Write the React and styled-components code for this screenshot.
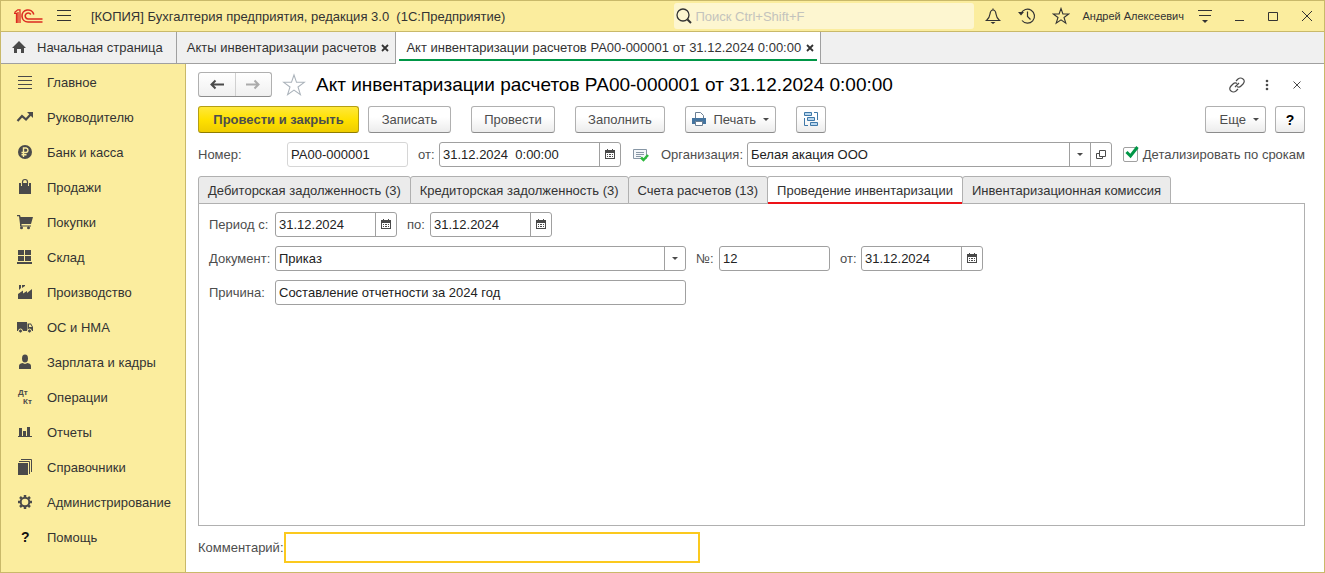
import React from "react";
import styled, { createGlobalStyle, css } from "styled-components";

const c = {
  yellow: "#fbed9e",
  gold: "#c9b96a",
  grey: "#a0a0a0",
  text: "#333333",
  label: "#4d4d4d",
  icon: "#4a4a4a",
};

const Global = createGlobalStyle`
  *, *::before, *::after { box-sizing: border-box; }
  body { margin: 0; background: #fff; }
  body, button, input, select {
    font-family: "Liberation Sans", Arial, sans-serif;
    font-size: 13px;
    color: ${c.text};
  }
  button { cursor: pointer; }
  svg { display: block; flex: none; }
`;

const Window = styled.div`
  display: flex;
  flex-direction: column;
  min-height: 100vh;
  border: 1px solid ${c.gold};
  white-space: nowrap;
`;

const TitleBar = styled.header`
  display: flex;
  align-items: center;
  height: 31px;
  padding-left: 12px;
  background: ${c.yellow};
  border-bottom: 1px solid ${c.gold};
`;

const Plain = styled.button`
  display: flex;
  align-items: center;
  justify-content: center;
  flex: none;
  width: ${(p) => p.$w || 34}px;
  height: 24px;
  padding: 0;
  border: 0;
  background: none;
  color: ${c.text};
`;

const AppName = styled.div`
  flex: 1;
  min-width: 0;
  overflow: hidden;
  padding-left: 6px;
`;

const Search = styled.label`
  display: flex;
  align-items: center;
  gap: 3px;
  flex: 0 1 300px;
  height: 26px;
  padding-left: 2px;
  margin-right: 2px;
  border-radius: 3px;
  background: #fdf6d0;
`;

const SearchInput = styled.input`
  flex: 1;
  min-width: 0;
  padding: 0;
  border: 0;
  outline: 0;
  background: none;
  &::placeholder { color: #c3c3bd; opacity: 1; }
`;

const User = styled.button`
  flex: none;
  padding: 0 4px;
  border: 0;
  background: none;
  font-size: 11px;
`;

const WindowTabs = styled.nav`
  display: flex;
  height: 32px;
  background: #f0f0f0;
  border-bottom: 1px solid ${c.grey};
`;

const WindowTab = styled.div`
  display: flex;
  align-items: center;
  gap: 2px;
  padding: 0 3px 0 10px;
  border-right: 1px solid ${c.grey};
  ${(p) =>
    p.$active &&
    css`
      margin-bottom: -1px;
      padding-bottom: 1px;
      background: linear-gradient(#009646, #009646) 3px 27px / calc(100% - 6px) 2px no-repeat #fff;
    `}
`;

const TabLink = styled.a`
  display: flex;
  align-items: center;
  gap: 10px;
  padding-right: ${(p) => p.$end || 0}px;
  color: ${c.text};
  text-decoration: none;
`;

const Body = styled.div`
  display: flex;
  flex: 1;
`;

const Sidebar = styled.nav`
  flex: none;
  width: 185px;
  padding-top: 1px;
  background: ${c.yellow};
  border-right: 1px solid ${c.gold};
`;

const SideLink = styled.a`
  display: flex;
  align-items: center;
  gap: 13px;
  height: 35px;
  padding-left: 15px;
  color: ${c.text};
  text-decoration: none;
`;

const Content = styled.main`
  display: flex;
  flex-direction: column;
  flex: 1;
  min-width: 0;
  padding: 8px 19px 9px 12px;
`;

const Heading = styled.div`
  display: flex;
  align-items: center;
  height: 25px;
  margin-bottom: 9px;
`;

const Title = styled.h1`
  flex: 1;
  min-width: 0;
  margin: 0;
  padding-left: 10px;
  font-size: 19px;
  font-weight: 400;
  color: #000;
`;

const NavPair = styled.div`
  display: flex;
  width: 74px;
  height: 25px;
  margin-right: 10px;
  border: 1px solid #b0b0b0;
  border-bottom-color: #8c8c8c;
  border-radius: 3px;
  background: linear-gradient(#fff, #f0f0f0);
`;

const NavButton = styled.button`
  display: flex;
  flex: 1;
  align-items: center;
  justify-content: center;
  padding: 0;
  border: 0;
  background: none;
  color: ${(p) => (p.disabled ? "#ababab" : c.icon)};
  & + & { border-left: 1px solid #d0d0d0; }
`;

const Toolbar = styled.div`
  display: flex;
  gap: 20px;
  margin-bottom: 9px;
`;

const Group = styled.div`
  display: flex;
  align-items: center;
  gap: 9px;
  flex: ${(p) => (p.$grow ? 1 : "none")};
  min-width: 0;
`;

const Button = styled.button`
  display: flex;
  align-items: center;
  justify-content: center;
  gap: 7px;
  min-width: ${(p) => p.$w}px;
  height: 27px;
  padding: 0 5px;
  border: 1px solid #b0b0b0;
  border-bottom-color: #8c8c8c;
  border-radius: 3px;
  background: linear-gradient(#fff 40%, #ececec);
  color: ${c.label};
  ${(p) =>
    p.$menu &&
    css`
      justify-content: flex-end;
      padding-right: 6px;
    `}
  ${(p) =>
    p.$primary &&
    css`
      border-color: #b59f12;
      border-bottom-color: #8f7c00;
      background: linear-gradient(#ffe83a, #ffe100 50%, #efcd00);
      font-weight: 700;
    `}
`;

const HelpMark = styled.b`
  font-size: 14px;
  color: #000;
`;

const FieldRow = styled.div`
  display: flex;
  align-items: center;
  margin-bottom: 9px;
`;

const Label = styled.label`
  flex: none;
  width: ${(p) => (p.$w ? `${p.$w}px` : "auto")};
  padding-left: ${(p) => p.$before || 0}px;
  color: ${c.label};
`;

const Box = styled.div`
  display: flex;
  flex: ${(p) => (p.$w ? "none" : 1)};
  width: ${(p) => (p.$w ? `${p.$w}px` : "auto")};
  min-width: 0;
  height: 25px;
  border: 1px solid ${(p) => (p.$soft ? "#d6d6d6" : c.grey)};
  border-radius: 3px;
  background: #fff;
`;

const control = css`
  flex: 1;
  min-width: 0;
  width: 100%;
  padding: 0 3px;
  border: 0;
  outline: 0;
  background: none;
  color: #222;
`;

const Input = styled.input`
  ${control}
`;

const Select = styled.select`
  ${control}
  appearance: none;
`;

const Addon = styled.button`
  display: flex;
  align-items: center;
  justify-content: center;
  flex: none;
  width: 21px;
  padding: 0;
  border: 0;
  border-left: 1px solid ${c.grey};
  background: none;
  color: ${c.icon};
`;

const CheckLabel = styled.label`
  display: flex;
  align-items: center;
  gap: 5px;
  flex: none;
  padding-left: 11px;
  color: ${c.label};
`;

const CheckBox = styled.span`
  position: relative;
  width: 15px;
  height: 15px;
  svg { position: absolute; left: 2px; bottom: 3px; pointer-events: none; }
  input:not(:checked) + svg { display: none; }
`;

const CheckInput = styled.input`
  display: block;
  appearance: none;
  width: 15px;
  height: 15px;
  margin: 0;
  border: 1px solid ${c.grey};
  border-radius: 2px;
  background: #fff;
`;

const Tabs = styled.div`
  display: flex;
  position: relative;
  margin-bottom: -1px;
`;

const Tab = styled.button`
  height: 28px;
  padding: 0 9px;
  border: 1px solid #b0b0b0;
  border-radius: 3px 3px 0 0;
  background: #ebebeb;
  & + & { margin-left: -1px; }
  &[aria-selected="true"] {
    border-bottom: 0;
    background: #fff;
    box-shadow: inset 0 -2px #ed1218;
  }
`;

const Panel = styled.section`
  flex: 1;
  padding: 8px 10px;
  border: 1px solid #b0b0b0;
`;

const Footer = styled.div`
  display: flex;
  align-items: center;
  padding-top: 6px;
`;

const Comment = styled.input`
  width: 416px;
  height: 31px;
  padding: 0 4px;
  border: 2px solid #fbc91e;
  outline: 0;
  background: #fff;
`;

const Svg = ({ w = 18, h = 18, children, ...rest }) => (
  <svg width={w} height={h} viewBox={`0 0 ${w} ${h}`} fill="none" stroke="currentColor" aria-hidden="true" {...rest}>
    {children}
  </svg>
);

const Logo = () => (
  <Svg w={30} h={16} stroke="#dc2a20" strokeWidth="1.6">
    <path d="M1 5.300H3.500V15M1.500 4.500 4.800 1.800H7V15M5 4V15" strokeWidth="1.300" />
    <path d="M20.800 6.500A6 6 0 1 0 15 14H29.500" />
    <path d="M17.800 6.500A3 3 0 1 0 15 11H29.500" />
  </Svg>
);

const Caret = () => (
  <Svg w={6} h={3} stroke="none" fill={c.icon}>
    <path d="M0 0H6L3 3Z" />
  </Svg>
);

const Calendar = () => (
  <Svg w={10} h={11} stroke="none" fill={c.icon}>
    <path fillRule="evenodd" d="M0 1H2V0H3V1H7V0H8V1H10V10H0ZM1 4V9H9V4Z" />
    <path d="M2 5H3V6H2ZM4 5H6V6H4ZM7 5H8V6H7ZM2 7H3V8H2ZM4 7H6V8H4ZM7 7H8V8H7Z" />
  </Svg>
);

const Cross = () => (
  <Svg w={8} h={8} strokeWidth="1.800">
    <path d="M1 1 7 7M7 1 1 7" />
  </Svg>
);

const Arrow = ({ flip }) => (
  <Svg w={14} h={11} strokeWidth="2">
    {flip ? <path d="M0 5.500H12M8.500 1.500 12.500 5.500 8.500 9.500" /> : <path d="M14 5.500H2M5.500 1.500 1.500 5.500 5.500 9.500" />}
  </Svg>
);

const STAR = "M9 1.500 10.900 7H16.700L12 10.500 13.800 16.200 9 12.800 4.200 16.200 6 10.500 1.300 7H7.100Z";

const solid = { stroke: "none", fill: c.icon };

const SideIcon = (props) => <Svg w={18} h={19} {...props} />;

const sideItems = [
  ["Главное", <SideIcon key="i" stroke={c.icon}><path d="M2 3.500H16M2 7.500H16M2 11.500H16M2 15.500H16" /></SideIcon>],
  ["Руководителю", <SideIcon key="i" stroke={c.icon} strokeWidth="2.200"><path d="M1.500 13 6 8 10 11.500 15 6" /><path d="M11 4H17V10Z" stroke="none" fill={c.icon} /></SideIcon>],
  ["Банк и касса", <SideIcon key="i" stroke={c.yellow} strokeWidth="1.400"><circle cx="9" cy="9" r="7" fill={c.icon} stroke="none" /><path d="M7.500 14V5H10.200A2.300 2.300 0 0 1 10.200 9.500H5.500M5.500 11.700H10.500" /></SideIcon>],
  ["Продажи", <SideIcon key="i" {...solid}><path d="M3 5H5V8H6V5H12V8H13V5H15V16H3Z" /><path d="M6.500 7V4Q6.500 1.500 9 1.500T11.500 4V7" fill="none" stroke={c.icon} strokeWidth="1.200" /></SideIcon>],
  ["Покупки", <SideIcon key="i" {...solid}><path d="M1 2H4L4.600 4H17L15 11H5.500V12.500H15V13.500H4V11L3 3.200H1Z" /><circle cx="5.500" cy="14.800" r="1.500" /><circle cx="12.500" cy="14.800" r="1.500" /></SideIcon>],
  ["Склад", <SideIcon key="i" {...solid}><path d="M2 2H8V7H2ZM9 2H15V7H9ZM2 8H8V13H2ZM9 8H15V13H9ZM1 14H16V16H1Z" /></SideIcon>],
  ["Производство", <SideIcon key="i" {...solid}><path d="M2 16V11L7 7.500V10.500L11 8V10L16 6V16ZM3 2H5V5L3 7ZM6 2H9V3L6 5Z" /></SideIcon>],
  ["ОС и НМА", <SideIcon key="i" {...solid}><path fillRule="evenodd" d="M1 4H11V13H1ZM11.500 5.500H15L17 9V13H11.500ZM13 6.500V9H16L14.500 6.500Z" /><g stroke={c.yellow}><circle cx="4.500" cy="13" r="2" /><circle cx="13.500" cy="13" r="2" /></g></SideIcon>],
  ["Зарплата и кадры", <SideIcon key="i" {...solid}><ellipse cx="9" cy="5.500" rx="3" ry="4" /><path d="M3 16V13Q3 10.500 6.500 10L9 11 11.500 10Q15 10.500 15 13V16Z" /></SideIcon>],
  ["Операции", <SideIcon key="i" {...solid}><text x="2" y="7" fontSize="8" fontWeight="700">Дт</text><text x="7" y="16" fontSize="8" fontWeight="700">Кт</text></SideIcon>],
  ["Отчеты", <SideIcon key="i" {...solid}><path d="M3 5H6V13H3ZM7 8H10V13H7ZM11 4H14V13H11ZM2 13H16V14H2Z" /></SideIcon>],
  ["Справочники", <SideIcon key="i" {...solid}><path d="M2 5H12V17H2Z" /><path d="M3 3.500H13.500V16M5 1.500H15.500V14" fill="none" stroke={c.icon} /></SideIcon>],
  ["Администрирование", <SideIcon key="i" stroke={c.icon} strokeWidth="2"><circle cx="9" cy="9" r="4.300" /><path strokeWidth="2.500" d="M9 2V4.500M9 13.500V16M2 9H4.500M13.500 9H16M4 4 5.700 5.700M12.300 12.300 14 14M4 14 5.700 12.300M12.300 5.700 14 4" /></SideIcon>],
  ["Помощь", <SideIcon key="i" stroke="none" fill="#111"><text x="5" y="14" fontSize="14" fontWeight="700">?</text></SideIcon>],
];

const formTabs = [
  "Дебиторская задолженность (3)",
  "Кредиторская задолженность (3)",
  "Счета расчетов (13)",
  "Проведение инвентаризации",
  "Инвентаризационная комиссия",
];

const DateField = ({ id, w = 122, value }) => (
  <Box $w={w}>
    <Input id={id} defaultValue={value} />
    <Addon aria-label="Выбрать дату"><Calendar /></Addon>
  </Box>
);

export default function App() {
  return (
    <>
      <Global />
      <Window>
        <TitleBar>
          <Logo />
          <Plain $w={42} aria-label="Меню">
            <Svg w={16} h={12}><path d="M1 .5H15M1 5.500H15M1 10.500H15" /></Svg>
          </Plain>
          <AppName>[КОПИЯ] Бухгалтерия предприятия, редакция 3.0&nbsp; (1С:Предприятие)</AppName>
          <Search>
            <Svg w={16} h={16} strokeWidth="1.300"><circle cx="7" cy="7" r="6" /><path d="M11.500 11.500 15 15" strokeWidth="2" /></Svg>
            <SearchInput placeholder="Поиск Ctrl+Shift+F" aria-label="Поиск" />
          </Search>
          <Plain aria-label="Уведомления">
            <Svg strokeWidth="1.200"><path d="M9 1.500V3M2.500 13.500H15.500Q12.500 11 12 7 11.500 3 9 3T6 7Q5.500 11 2.500 13.500Z" /><path d="M6.500 15H11.500L9 17Z" stroke="none" fill="currentColor" /></Svg>
          </Plain>
          <Plain aria-label="История">
            <Svg strokeWidth="1.200"><path d="M3 6.500A7 7 0 1 1 4 13.500M9.500 4.500V9.500L12.500 12.500" /><path d="M0 5H6L3 8.500Z" stroke="none" fill="currentColor" /></Svg>
          </Plain>
          <Plain aria-label="Избранное"><Svg strokeWidth="1.100"><path d={STAR} /></Svg></Plain>
          <User>Андрей Алексеевич</User>
          <Plain aria-label="Настройки">
            <Svg w={16} h={14}><path d="M1 1.500H15M2 6.500H14" /><path d="M5 11H11L8 14Z" stroke="none" fill="currentColor" /></Svg>
          </Plain>
          <Plain aria-label="Свернуть"><Svg w={10} h={10}><path d="M1 9.500H10" /></Svg></Plain>
          <Plain aria-label="Развернуть"><Svg w={10} h={10}><path d="M.5 1.500H9.500V9.500H.5Z" /></Svg></Plain>
          <Plain aria-label="Закрыть"><Svg w={12} h={12}><path d="M1 1 11 11M11 1 1 11" /></Svg></Plain>
        </TitleBar>

        <WindowTabs>
          <WindowTab>
            <TabLink href="#home" $end={10}>
              <Svg w={16} h={13} {...solid}><path d="M8 0 15 7H13V12H10V8H6V12H3V7H1Z" /></Svg>
              Начальная страница
            </TabLink>
          </WindowTab>
          <WindowTab>
            <TabLink href="#acts">Акты инвентаризации расчетов</TabLink>
            <Plain $w={14} aria-label="Закрыть вкладку"><Cross /></Plain>
          </WindowTab>
          <WindowTab $active>
            <TabLink href="#act">Акт инвентаризации расчетов РА00-000001 от 31.12.2024 0:00:00</TabLink>
            <Plain $w={14} aria-label="Закрыть вкладку"><Cross /></Plain>
          </WindowTab>
        </WindowTabs>

        <Body>
          <Sidebar>
            {sideItems.map(([name, icon]) => (
              <SideLink key={name} href="#section">{icon}{name}</SideLink>
            ))}
          </Sidebar>

          <Content>
            <Heading>
              <NavPair>
                <NavButton aria-label="Назад"><Arrow /></NavButton>
                <NavButton aria-label="Вперед" disabled><Arrow flip /></NavButton>
              </NavPair>
              <Plain $w={24} aria-label="В избранное">
                <Svg w={24} h={24} viewBox="0 0 18 18" stroke="#aab2ba" strokeWidth=".8"><path d={STAR} /></Svg>
              </Plain>
              <Title>Акт инвентаризации расчетов РА00-000001 от 31.12.2024 0:00:00</Title>
              <Plain $w={16} aria-label="Ссылка">
                <Svg w={16} h={16} stroke={c.icon} strokeWidth="1.200"><path d="M7 4 9 2Q11.500 0 14 2T14 7L12 9Q10 11 8 9.500M9 12 7 14Q4.500 16 2 14T2 9L4 7Q6 5 8 6.500M6 10 10 6" /></Svg>
              </Plain>
              <Plain $w={44} aria-label="Действия">
                <Svg w={4} h={12} {...solid}><circle cx="2" cy="2" r="1.300" /><circle cx="2" cy="6" r="1.300" /><circle cx="2" cy="10" r="1.300" /></Svg>
              </Plain>
              <Plain $w={16} aria-label="Закрыть форму"><Svg w={8} h={8} stroke={c.icon}><path d="M.5 .5 7.500 7.500M7.500 .5 .5 7.500" /></Svg></Plain>
            </Heading>

            <Toolbar>
              <Group>
                <Button $w={161} $primary>Провести и закрыть</Button>
                <Button $w={83}>Записать</Button>
              </Group>
              <Button $w={84}>Провести</Button>
              <Button $w={90}>Заполнить</Button>
              <Button $w={91} $menu>
                <Svg w={14} h={15} stroke="none">
                  <path d="M3.500 7V.5H8.500L11.500 3.500V7" fill="#fff" stroke="#6b7f93" />
                  <path d="M0 6H14V12H0Z" fill="#44749f" />
                  <path d="M3.500 9.500H10.500V13.500H3.500Z" fill="#fff" stroke="#6b7f93" />
                </Svg>
                Печать
                <Caret />
              </Button>
              <Button $w={30} aria-label="Структура подчиненности">
                <Svg w={16} h={15} stroke="#3f78a8">
                  <path d="M1.500 .5H8.500V3.500H1.500ZM4.500 5.500H11.500V8.500H4.500ZM7.500 10.500H14.500V13.500H7.500Z" fill="#b9d7ee" />
                  <path d="M11 .5H14.500V8M1.500 6V13.500H5" />
                </Svg>
              </Button>
              <Group $grow />
              <Group>
                <Button $w={61} $menu>Еще<Caret /></Button>
                <Button $w={30} aria-label="Справка"><HelpMark>?</HelpMark></Button>
              </Group>
            </Toolbar>

            <FieldRow>
              <Label htmlFor="num" $w={89}>Номер:</Label>
              <Box $w={121} $soft><Input id="num" defaultValue="РА00-000001" /></Box>
              <Label htmlFor="date" $before={10} $w={31}>от:</Label>
              <DateField id="date" w={182} value="31.12.2024  0:00:00" />
              <Plain $w={40} aria-label="Проведен">
                <Svg w={16} h={14} stroke="#8796a5">
                  <path d="M.5 1.500H13.500V10.500H.5Z" fill="#f4f7fa" />
                  <path d="M3 4.500H11M3 6.500H11M3 8.500H8" />
                  <path d="M8 9.500 10.500 12 15 7" stroke="#2db83d" strokeWidth="2.500" />
                </Svg>
              </Plain>
              <Label htmlFor="org" $w={86}>Организация:</Label>
              <Box>
                <Select id="org"><option>Белая акация ООО</option></Select>
                <Addon aria-label="Выбрать"><Caret /></Addon>
                <Addon aria-label="Открыть">
                  <Svg w={10} h={9} stroke={c.icon}><path d="M3.500 .5H9.500V6.500H3.500ZM3 3.500H.5V8.500H6.500V7" /></Svg>
                </Addon>
              </Box>
              <CheckLabel>
                <CheckBox>
                  <CheckInput type="checkbox" defaultChecked />
                  <Svg w={14} h={13} stroke="#009646" strokeWidth="3"><path d="M1.500 6 5.500 10 12.500 1" /></Svg>
                </CheckBox>
                Детализировать по срокам
              </CheckLabel>
            </FieldRow>

            <Tabs role="tablist">
              {formTabs.map((name, i) => (
                <Tab key={name} role="tab" aria-selected={i === 3}>{name}</Tab>
              ))}
            </Tabs>
            <Panel role="tabpanel">
              <FieldRow>
                <Label htmlFor="from" $w={66}>Период с:</Label>
                <DateField id="from" value="31.12.2024" />
                <Label htmlFor="to" $before={10} $w={33}>по:</Label>
                <DateField id="to" value="31.12.2024" />
              </FieldRow>
              <FieldRow>
                <Label htmlFor="doc" $w={66}>Документ:</Label>
                <Box $w={411}>
                  <Select id="doc"><option>Приказ</option></Select>
                  <Addon aria-label="Выбрать"><Caret /></Addon>
                </Box>
                <Label htmlFor="docnum" $before={10} $w={33}>№:</Label>
                <Box $w={111}><Input id="docnum" defaultValue="12" /></Box>
                <Label htmlFor="docdate" $before={10} $w={31}>от:</Label>
                <DateField id="docdate" value="31.12.2024" />
              </FieldRow>
              <FieldRow>
                <Label htmlFor="reason" $w={66}>Причина:</Label>
                <Box $w={411}><Input id="reason" defaultValue="Составление отчетности за 2024 год" /></Box>
              </FieldRow>
            </Panel>

            <Footer>
              <Label htmlFor="comment" $w={86}>Комментарий:</Label>
              <Comment id="comment" />
            </Footer>
          </Content>
        </Body>
      </Window>
    </>
  );
}
